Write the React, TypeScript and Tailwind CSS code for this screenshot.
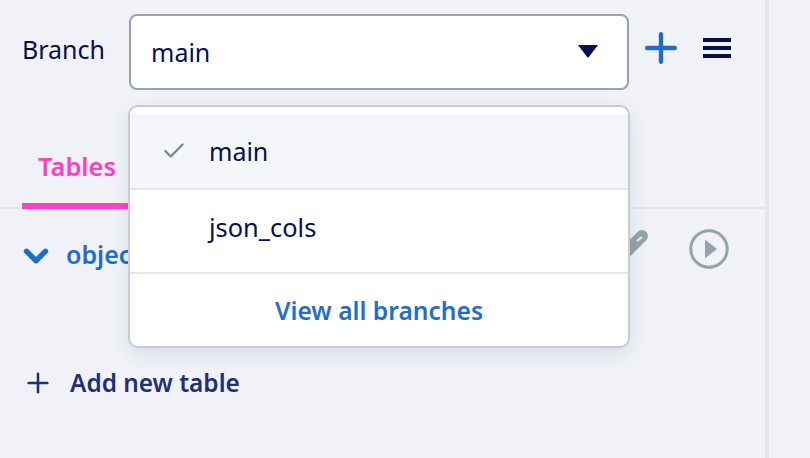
import { ChevronDown, Check, Plus } from 'lucide-react'

const font = 'font-["Noto_Sans",sans-serif]'

function BranchMenu() {
  return (
    <div className="absolute left-[128px] top-[105px] w-[502px] h-[243px] bg-white rounded-[10px] border-2 border-[#c8cbd2] shadow-[0_6px_18px_rgba(30,40,80,0.10)] overflow-hidden z-10 pt-[7px]">
      <div className="h-[76px] bg-[#f5f6fa] border-b-2 border-[#e4e5ec] flex items-center pl-[31px]">
        <Check size={26} strokeWidth={2} className="text-[#6d849b]" />
        <span className="ml-[22px] text-[25px] text-[#05104a] mt-[1px]">main</span>
      </div>
      <div className="h-[84px] border-b-2 border-[#e4e5ec] flex items-center pl-[79px]">
        <span className="text-[25.4px] text-[#05104a] -mt-[7px]">json_cols</span>
      </div>
      <div className="h-[72px] flex items-center justify-center">
        <span className="text-[24.6px] font-semibold text-[#1f6fc9] mt-[2px]">View all branches</span>
      </div>
    </div>
  )
}

export default function App() {
  return (
    <div className={`relative w-[810px] h-[458px] overflow-hidden bg-[#f0f2f8] flex ${font}`}>
      <div className="w-[769px] h-full border-r-4 border-[#e4e6ee] flex flex-col">
        {/* Branch row */}
        <div className="flex items-center pl-[22px] pt-[14px]">
          <span className="w-[107px] text-[25px] text-[#05104a] -mt-[4px]">Branch</span>
          <div className="w-[500px] h-[76px] bg-white border-2 border-[#95a3ab] rounded-[8px] flex items-center justify-between pl-[20px] pr-[29px]">
            <span className="text-[25px] text-[#05104a] mt-[1px]">main</span>
            <svg width="20" height="13" viewBox="0 0 20 13" className="-mt-[2px]">
              <path d="M0 0h20L10.5 12.5h-1z" fill="#05104a" />
            </svg>
          </div>
          <svg width="32" height="32" viewBox="0 0 32 32" className="ml-[16px] -mt-[8px]">
            <path d="M2.2 16h27.6M16 2.2v27.6" stroke="#1f6fc9" strokeWidth="4.4" strokeLinecap="round" />
          </svg>
          <svg width="28" height="20" viewBox="0 0 28 20" className="ml-[26px] -mt-[8px]">
            <path d="M0 0h28v4H0zM0 8h28v4H0zM0 16h28v4H0z" fill="#05104a" />
          </svg>
        </div>

        {/* Tabs */}
        <div className="mt-[56px] h-[63px] border-b-2 border-[#e4e6ee] pl-[22px]">
          <div className="w-[140px] h-[63px] border-b-[6px] border-[#ff3fc6] pl-[16px] flex items-start">
            <span className="text-[25.5px] font-semibold text-[#ff3fc6] leading-[40px]">Tables</span>
          </div>
        </div>

        {/* Table row */}
        <div className="mt-[19px] h-[42px] flex items-center pl-[17px] pr-[36px]">
          <ChevronDown size={38} strokeWidth={3.4} className="text-[#1f6fc9] mt-[13px]" />
          <span className="ml-[11px] text-[25px] font-semibold text-[#1f6fc9] mt-[12px]">objects</span>
          <svg width="30" height="34" viewBox="0 0 30 34" className="ml-auto mr-[37px] self-start">
            <path d="M0 28L20 8" stroke="#95a3ab" strokeWidth="12" strokeLinecap="round" />
            <path d="M15 13L20 9" stroke="#f0f2f8" strokeWidth="2" />
          </svg>
          <svg width="40" height="40" viewBox="0 0 40 40">
            <circle cx="20" cy="20" r="18.2" fill="none" stroke="#95a3ab" strokeWidth="3" />
            <path d="M16 10.5L28 20L16 29.5z" fill="#95a3ab" />
          </svg>
        </div>

        {/* Add table */}
        <div className="mt-[94px] flex items-center pl-[22px]">
          <Plus size={32} strokeWidth={1.9} className="text-[#1f2f7a]" />
          <span className="ml-[16px] text-[24.4px] font-semibold text-[#1f2f7a] mt-[1px]">Add new table</span>
        </div>
      </div>
      <BranchMenu />
    </div>
  )
}
